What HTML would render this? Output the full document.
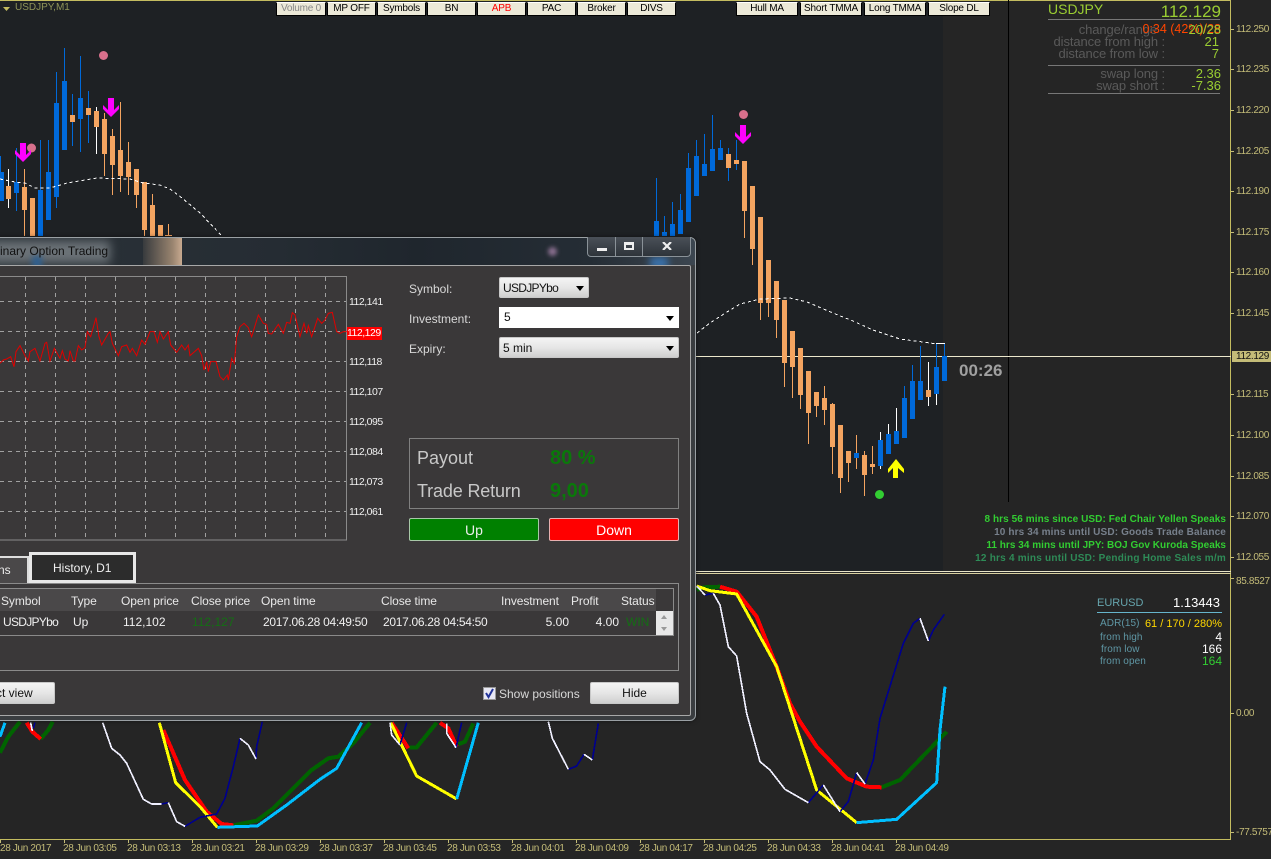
<!DOCTYPE html>
<html><head><meta charset="utf-8"><style>
html,body{margin:0;padding:0;background:#252525}
#p{position:relative;width:1271px;height:859px;overflow:hidden;background:#252525;font-family:"Liberation Sans",sans-serif}
.t{position:absolute;white-space:nowrap;line-height:14px;height:14px}
.r{text-align:right}
.b{position:absolute;box-sizing:border-box}
.a{font-size:10px;letter-spacing:-.35px;color:#c4bc78;left:1236px;margin-top:1px}
.x{font-size:10px;letter-spacing:-.35px;color:#c4bc78;top:842px}
.tb{position:absolute;top:2px;height:14px;box-sizing:border-box;background:#ece9d8;border:1px solid #000;border-top-color:#fff;font-size:10px;letter-spacing:-.2px;line-height:12px;text-align:center;color:#000}
.g{font-size:13px;color:#5a5a5a;letter-spacing:-.1px}
.v{font-size:13px;color:#9acd32}
.n{font-size:10px;font-weight:bold;right:45px}
.l{font-size:12px;color:#d8d8d8}
.h{font-size:12px;color:#e8e8e8;top:594px;letter-spacing:-.08px}
.c{font-size:12px;color:#f0f0f0;top:615px}
.cb{position:absolute;box-sizing:border-box;border:1px solid #c8c8c8;border-radius:2px;background:linear-gradient(#f4f4f4,#e6e6e6 50%,#cfcfcf);font-size:12px;color:#111}
.e{font-size:10px;color:#5f97a5;letter-spacing:.1px}
.f{font-size:12px;color:#fff}
.ar{position:absolute;width:0;height:0;border-left:4px solid transparent;border-right:4px solid transparent;border-top:5px solid #000}
.lb{font-size:10.5px;letter-spacing:-.5px;color:#f0f0f0;left:349px}
</style></head><body><div id="p">

<div class="b" style="left:0;top:0;width:943px;height:571px;background:#1e2124"></div>

<svg class="b" style="left:0;top:0" width="1271" height="859" viewBox="0 0 1271 859" fill="none">
<g shape-rendering="crispEdges">
<path stroke="#c4bc60" d="M0 .5H1231M1230.5 0V840M0 839.5H1231"/>
<path stroke="#000" d="M1008.5 0V502"/>
<path stroke="#c4bc78" d="M1231 29.5h3M1231 69.5h3M1231 110.5h3M1231 151.5h3M1231 191.5h3M1231 232.5h3M1231 272.5h3M1231 313.5h3M1231 394.5h3M1231 435.5h3M1231 476.5h3M1231 516.5h3M1231 557.5h3M1231 578.5h3M1231 713.5h3M1231 832.5h3M.5 840v3M64.5 840v3M128.5 840v3M192.5 840v3M256.5 840v3M320.5 840v3M384.5 840v3M448.5 840v3M512.5 840v3M576.5 840v3M640.5 840v3M704.5 840v3M768.5 840v3M832.5 840v3M896.5 840v3"/>
<path stroke="#e8e4c8" d="M0 571.5H1231"/>
<path stroke="#d8d0a0" d="M0 573.5H1231"/>
<path stroke="#ece8cc" d="M690 356.5H1231"/>

<path stroke="#0069d9" d="M.5 156V201M16.5 148V211M40.5 140V236M48.5 140V220M56.5 72V208M64.5 48V150M72.5 94V146M80.5 56V152M88.5 91V143M656.5 178V236M664.5 216V236M672.5 202V236M680.5 194V234M688.5 153V222M696.5 140V196M704.5 134V176M712.5 115V171M720.5 140V160M728.5 148V181M736.5 140V170M904.5 386V438M912.5 365V419M920.5 346V400M936.5 344V394M944.5 343V381"/>
<path stroke="#f4a460" d="M24.5 169V236M104.5 113V176M112.5 129V195M120.5 102V192M128.5 142V195M136.5 169V208M144.5 182V236M152.5 194V236M168.5 224V236M165 235.5H172M744.5 161V238M752.5 186V265M760.5 217V320M768.5 260V317M776.5 281V338M784.5 300V387M792.5 331V398M800.5 348V409M808.5 371V444M816.5 392V417M824.5 386V425M832.5 403V474M840.5 425V493M848.5 451V482M856.5 435V469M864.5 451V496M872.5 446V474"/>
<path stroke="#fff" d="M8.5 169V208M96.5 107V154M880.5 432V469M888.5 424V454M896.5 408V444M928.5 362V406M936.5 394V405M936 343.5H945"/>
<g stroke="#0069d9" stroke-width="5">
<path d="M1.5 172V201M16.5 182V193M40.5 190V236M48.5 172V220M56.5 103V197M64.5 81V150M80.5 98V119M656.5 221V236M664.5 232V236M672.5 224V236M680.5 210V234M688.5 168V222M696.5 156V196M704.5 164V176M712.5 149V171M720.5 148V160M856.5 453V458M880.5 440V466M888.5 434V454M896.5 431V444M904.5 398V438M912.5 381V419M920.5 381V400M936.5 367V394M944.5 356V381"/>
</g>
<g stroke="#f4a460" stroke-width="5">
<path d="M8.5 186V199M24.5 187V210M32.5 198V236M72.5 115V122M88.5 108V115M96.5 111V127M104.5 119V154M112.5 136V165M120.5 150V176M128.5 162V177M136.5 169V195M144.5 182V230M152.5 205V236M160.5 225V236M728.5 154V168M736.5 160V164M744.5 161V211M752.5 186V249M760.5 217V303M768.5 260V303M776.5 281V320M784.5 300V363M792.5 331V367M800.5 348V395M808.5 371V413M816.5 392V406M824.5 398V410M832.5 404V447M840.5 425V478M848.5 451V463M864.5 455V475M872.5 464V467M928.5 390V397"/>
</g>
<path stroke="#fff" stroke-dasharray="3 3" d="M0 179L15 182L25 183L35 188L50 188L67 183L97 178L130 179L143 183L160 185L170 189L182 198L200 213L222 236"/>
<path stroke="#fff" stroke-dasharray="3 3" d="M697 333L710 323L727 312L740 304L760 299L790 298L807 302L833 313L853 321L873 330L900 339L923 342L937 344"/>
</g>

<circle cx="103.5" cy="55.5" r="4.5" fill="#d8708c"/>
<circle cx="31.5" cy="148" r="4.5" fill="#d8708c"/>
<circle cx="743.5" cy="114.5" r="4.5" fill="#d8708c"/>
<circle cx="879.5" cy="494.5" r="4.5" fill="#32cd32"/>
<g fill="#ff00ff">
<path d="M20 143H26V155L31 150V154L23 162L15 154V150L20 155Z"/>
<path d="M108 98H114V110L119 105V109L111 117L103 109V105L108 110Z"/>
<path d="M740 125H746V137L751 132V136L743 144L735 136V132L740 137Z"/>
</g>
<path fill="#ffff00" d="M893 478V468L888 473V469L896 459L904 469V473L898 468V478Z"/>

<g transform="translate(0,710) scale(.33333)" shape-rendering="crispEdges">
<path stroke="#006400" stroke-width="12" d="M0 128L25 80L60 35"/>
<path stroke="#006400" stroke-width="12" d="M122 87L145 60L158 35"/>
<path stroke="#006400" stroke-width="12" d="M700 346L770 332L820 295L900 215L935 180L985 145L1015 140L1060 100L1110 38"/>
<path stroke="#006400" stroke-width="12" d="M1225 112L1250 112L1310 38M1375 103L1395 95L1420 40"/>
<path stroke="#ff0000" stroke-width="12" d="M80 38L97 65L122 87M490 60L555 210L620 305L665 342L700 346M1175 38L1225 115M1320 38L1345 55L1370 110"/>
<path stroke="#ffff00" stroke-width="9" d="M478 38L527 218L600 290L652 352M1172 38L1250 198L1370 267"/>
<path stroke="#00bfff" stroke-width="9" d="M0 80L15 38M652 352L772 348L860 285L960 208L1010 175L1085 38M1370 267L1435 38"/>
<path stroke="#00008b" stroke-width="5" d="M485 282L505 278M555 349L600 322L650 312L675 265L700 170L720 85M768 147L770 110L787 35M1200 105L1220 38M1368 113L1385 38M100 55L105 38"/>
<path stroke="#f0f0ff" stroke-width="5" d="M308 38L335 115L360 135L380 160L430 268L455 282L485 282M505 278L530 335L555 349M720 85L745 105L768 147M1170 38L1175 75L1200 105M1340 40L1340 70L1368 113M92 38L97 63"/>
</g>
<g transform="translate(500,580) scale(.33333)" shape-rendering="crispEdges">
<path stroke="#006400" stroke-width="12" d="M590 30L610 22L660 20M1145 622L1200 600L1340 455"/>
<path stroke="#ff0000" stroke-width="12" d="M660 20L710 35L770 110L830 260L870 370L900 425L950 500L1040 595L1100 620L1145 622"/>
<path stroke="#ffff00" stroke-width="9" d="M590 18L630 32L710 42L830 260L950 630L1070 728"/>
<path stroke="#00bfff" stroke-width="9" d="M1070 728L1190 718L1310 608L1320 450L1335 320"/>
<path stroke="#00008b" stroke-width="5" d="M205 568L230 558L252 523M277 540L295 430M615 45L640 40M925 668L970 615M1020 695L1045 665L1070 578M1095 612L1120 540L1140 415L1210 190L1240 130L1260 115M1285 183L1300 150L1333 103"/>
<path stroke="#f0f0ff" stroke-width="5" d="M145 425L157 475L205 568M252 523L277 540M590 18L615 45M640 40L660 75L685 200L710 228L740 400L780 545L810 570L855 628L925 668M970 615L1020 695M1070 578L1095 612M1260 115L1285 183"/>
</g>
<path fill="#c4bc60" d="M3 7h7l-3.500 4z"/>
</svg>

<div class="t" style="left:15px;top:1px;font-size:10px;color:#8f9458">USDJPY,M1</div>
<div class="tb" style="left:276px;width:50px;color:#888">Volume 0</div>
<div class="tb" style="left:327px;width:49px">MP OFF</div>
<div class="tb" style="left:377px;width:49px">Symbols</div>
<div class="tb" style="left:427px;width:49px">BN</div>
<div class="tb" style="left:477px;width:49px;color:#f00">APB</div>
<div class="tb" style="left:527px;width:49px">PAC</div>
<div class="tb" style="left:577px;width:49px">Broker</div>
<div class="tb" style="left:627px;width:49px">DIVS</div>
<div class="tb" style="left:736px;width:62px">Hull MA</div>
<div class="tb" style="left:800px;width:62px">Short TMMA</div>
<div class="tb" style="left:864px;width:62px">Long TMMA</div>
<div class="tb" style="left:928px;width:62px">Slope DL</div>

<div class="t" style="left:1048px;top:2px;font-size:14px;color:#9acd32">USDJPY</div>
<div class="t r" style="right:50px;top:5px;font-size:17px;color:#9acd32">112.129</div>
<div class="b" style="left:1048px;top:19px;width:172px;height:1px;background:#777"></div>
<div class="t g r" style="right:114px;top:23px">change/range</div>
<div class="t r" style="right:50px;top:22px;font-size:12.5px;color:#ff4500">0:34 (42%)/28</div>
<div class="t r" style="right:50px;top:23px;font-size:13px;color:#9acd32">20/28</div>
<div class="t g r" style="right:106px;top:35px">distance from high :</div>
<div class="t v r" style="right:52px;top:35px">21</div>
<div class="t g r" style="right:106px;top:47px">distance from low :</div>
<div class="t v r" style="right:52px;top:47px">7</div>
<div class="b" style="left:1048px;top:65px;width:172px;height:1px;background:#777"></div>
<div class="t g r" style="right:106px;top:67px">swap long :</div>
<div class="t v r" style="right:50px;top:67px">2.36</div>
<div class="t g r" style="right:106px;top:79px">swap short :</div>
<div class="t v r" style="right:50px;top:79px">-7.36</div>
<div class="b" style="left:1048px;top:93px;width:172px;height:1px;background:#777"></div>

<div class="t a" style="top:22px">112.250</div><div class="t a" style="top:62px">112.235</div>
<div class="t a" style="top:103px">112.220</div><div class="t a" style="top:144px">112.205</div>
<div class="t a" style="top:184px">112.190</div><div class="t a" style="top:225px">112.175</div>
<div class="t a" style="top:265px">112.160</div><div class="t a" style="top:306px">112.145</div>
<div class="b" style="left:1232px;top:351px;width:39px;height:11px;background:#c4bc78"></div>
<div class="t a" style="top:349px;color:#111">112.129</div>
<div class="t a" style="top:387px">112.115</div><div class="t a" style="top:428px">112.100</div>
<div class="t a" style="top:469px">112.085</div><div class="t a" style="top:509px">112.070</div>
<div class="t a" style="top:550px">112.055</div>
<div class="t a" style="top:574px">85.8527</div>
<div class="t a" style="top:706px">0.00</div>
<div class="t a" style="top:825px">-77.5757</div>

<div class="t" style="left:959px;top:364px;font-size:17px;font-weight:bold;color:#a0a0a0">00:26</div>
<div class="t n r" style="top:513px;color:#32cd32;letter-spacing:.08px">8 hrs 56 mins since USD: Fed Chair Yellen Speaks</div>
<div class="t n r" style="top:526px;color:#77808c;letter-spacing:.14px">10 hrs 34 mins until USD: Goods Trade Balance</div>
<div class="t n r" style="top:539px;color:#32cd32;letter-spacing:.03px">11 hrs 34 mins until JPY: BOJ Gov Kuroda Speaks</div>
<div class="t n r" style="top:552px;color:#2e8b57;letter-spacing:.23px">12 hrs 4 mins until USD: Pending Home Sales m/m</div>

<div class="t" style="left:1097px;top:596px;font-size:11px;color:#66a5ad">EURUSD</div>
<div class="t r" style="right:51px;top:596px;font-size:13px;color:#fff">1.13443</div>
<div class="b" style="left:1097px;top:612px;width:125px;height:1px;background:#66b5cc"></div>
<div class="t e" style="left:1100px;top:617px">ADR(15)</div>
<div class="t r" style="right:49px;top:617px;font-size:11px;color:#ffd700">61 / 170 / 280%</div>
<div class="t e" style="left:1100px;top:631px">from high</div><div class="t f r" style="right:49px;top:630px">4</div>
<div class="t e" style="left:1101px;top:643px">from low</div><div class="t f r" style="right:49px;top:642px">166</div>
<div class="t e" style="left:1100px;top:655px">from open</div><div class="t f r" style="right:49px;top:654px;color:#32cd32">164</div>

<div class="t x" style="left:0">28 Jun 2017</div><div class="t x" style="left:63px">28 Jun 03:05</div>
<div class="t x" style="left:127px">28 Jun 03:13</div><div class="t x" style="left:191px">28 Jun 03:21</div>
<div class="t x" style="left:255px">28 Jun 03:29</div><div class="t x" style="left:319px">28 Jun 03:37</div>
<div class="t x" style="left:383px">28 Jun 03:45</div><div class="t x" style="left:447px">28 Jun 03:53</div>
<div class="t x" style="left:511px">28 Jun 04:01</div><div class="t x" style="left:575px">28 Jun 04:09</div>
<div class="t x" style="left:639px">28 Jun 04:17</div><div class="t x" style="left:703px">28 Jun 04:25</div>
<div class="t x" style="left:767px">28 Jun 04:33</div><div class="t x" style="left:831px">28 Jun 04:41</div>
<div class="t x" style="left:895px">28 Jun 04:49</div>

<div class="b" style="left:-6px;top:237px;width:702px;height:484px;border:1px solid #9aa0a4;border-radius:6px;background:#3a3d40;box-shadow:0 0 4px rgba(0,0,0,.5)"></div>
<div class="b" style="left:0;top:238px;width:695px;height:27px;overflow:hidden;border-top-right-radius:5px;background:linear-gradient(90deg,#2b3238,#252c33 40%,#1f262d 60%,#252d35 85%,#3c4650)">
<div class="b" style="left:-10px;top:3px;width:120px;height:22px;background:#6c7378;filter:blur(5px)"></div>
<div class="b" style="left:143px;top:-6px;width:39px;height:40px;background:linear-gradient(90deg,rgba(190,160,130,.1),rgba(190,160,130,.75) 75%,#c8aa90)"></div>
<div class="b" style="left:32px;top:18px;width:10px;height:12px;background:#30608f;filter:blur(3px)"></div>
<div class="b" style="left:548px;top:9px;width:9px;height:9px;border-radius:50%;background:#8a6f8f;filter:blur(2px)"></div>
<div class="b" style="left:650px;top:19px;width:18px;height:12px;background:#3a74b0;filter:blur(4px)"></div>
</div>
<div class="t" style="left:0;top:244px;font-size:12px;color:#111">inary Option Trading</div>

<div class="b" style="left:587px;top:237px;width:104px;height:20px;border:1px solid #8a9298;border-top:0;border-radius:0 0 4px 4px;background:linear-gradient(#4a5058,#2e343a)"></div>
<div class="b" style="left:615px;top:237px;width:1px;height:19px;background:#8a9298"></div>
<div class="b" style="left:642px;top:237px;width:1px;height:19px;background:#8a9298"></div>
<div class="b" style="left:597px;top:248px;width:10px;height:3px;background:#eee"></div>
<div class="b" style="left:624px;top:242px;width:10px;height:8px;border:2px solid #eee;border-top-width:3px"></div>
<svg class="b" style="left:662px;top:242px" width="10" height="8" viewBox="0 0 10 8"><path stroke="#eee" stroke-width="2.200" d="M1 0L9 8M9 0L1 8"/></svg>

<div class="b" style="left:0;top:265px;width:691px;height:451px;background:#3a3839;border:1px solid #a8a8a8;border-left:0;border-radius:0 2px 2px 0"></div>

<svg class="b" style="left:0;top:235px" width="400" height="320" viewBox="0 0 1200 960" fill="none">
<g stroke="#a0a0a0" stroke-width="3" stroke-dasharray="12 12" shape-rendering="crispEdges">
<path d="M0 199H1040M0 289H1040M0 379H1040M0 469H1040M0 559H1040M0 649H1040M0 739H1040M0 829H1040"/>
<path d="M76 126V915M166 126V915M256 126V915M346 126V915M436 126V915M526 126V915M616 126V915M706 126V915M796 126V915M886 126V915M976 126V915"/>
</g>
<path stroke="#8a8a8a" stroke-width="3" shape-rendering="crispEdges" d="M0 124.500H1039.500V915.500H0"/>
<path stroke="#e00000" stroke-width="3" d="M0 385L10 375L20 372L32 365L42 395L48 350L60 332L75 362L85 378L90 350L105 340L120 378L135 325L140 322L150 378L163 340L180 370L187 347L195 372L205 378L210 347L220 378L225 378L235 332L245 345L255 338L262 290L272 305L288 248L297 305L305 330L325 295L330 290L337 325L355 362L365 335L380 330L390 352L397 340L410 362L425 315L435 328L450 290L462 290L472 322L480 290L490 312L505 290L512 330L530 352L545 330L555 345L565 330L570 362L595 340L605 362L612 405L620 380L625 410L632 380L648 380L660 425L670 435L682 420L685 435L695 370L703 385L710 305L720 275L732 265L745 278L755 305L775 240L790 265L800 268L805 295L815 297L835 268L850 295L860 262L870 265L877 233L885 240L900 305L912 265L920 295L925 272L935 305L953 250L965 265L975 255L985 235L997 232L1010 290L1020 295L1030 290L1040 290"/>
</svg>
<div class="t lb" style="top:295px">112,141</div>
<div class="b" style="left:347px;top:327px;width:35px;height:13px;background:#f00"></div>
<div class="t lb" style="top:326px;left:347px;color:#fff">112,129</div>
<div class="t lb" style="top:355px">112,118</div>
<div class="t lb" style="top:385px">112,107</div>
<div class="t lb" style="top:415px">112,095</div>
<div class="t lb" style="top:445px">112,084</div>
<div class="t lb" style="top:475px">112,073</div>
<div class="t lb" style="top:505px">112,061</div>

<div class="t l" style="left:409px;top:282px">Symbol:</div>
<div class="t l" style="left:409px;top:312px">Investment:</div>
<div class="t l" style="left:409px;top:342px">Expiry:</div>
<div class="cb" style="left:499px;top:277px;width:90px;height:21px;padding:3px 0 0 3px;line-height:14px;letter-spacing:-.7px">USDJPYbo</div>
<div class="ar" style="left:576px;top:286px"></div>
<div class="b" style="left:499px;top:307px;width:180px;height:21px;background:#fff;font-size:12px;color:#111;padding:3px 0 0 5px;line-height:14px">5</div>
<div class="ar" style="left:666px;top:316px"></div>
<div class="cb" style="left:499px;top:337px;width:180px;height:21px;padding:3px 0 0 3px;line-height:14px">5 min</div>
<div class="ar" style="left:666px;top:346px"></div>

<div class="b" style="left:409px;top:438px;width:270px;height:71px;border:1px solid #808080"></div>
<div class="t" style="left:417px;top:451px;font-size:18px;color:#c8c8c8">Payout</div>
<div class="t" style="left:417px;top:484px;font-size:18px;letter-spacing:-.15px;color:#c8c8c8">Trade Return</div>
<div class="t" style="left:550px;top:451px;font-size:20px;font-weight:bold;color:#0a780a">80 %</div>
<div class="t" style="left:550px;top:484px;font-size:20px;font-weight:bold;color:#0a780a">9,00</div>
<div class="b" style="left:409px;top:518px;width:130px;height:23px;background:#008000;border:1px solid #a8c8a8;border-radius:2px;color:#eee;font-size:14px;text-align:center;line-height:23px">Up</div>
<div class="b" style="left:549px;top:518px;width:130px;height:23px;background:#f00;border:1px solid #e8b0b0;border-radius:2px;color:#fff;font-size:14px;text-align:center;line-height:23px">Down</div>

<div class="b" style="left:0;top:556px;width:29px;height:27px;background:#4a4849;border-top:2px solid #ddd;border-right:2px solid #ddd"></div>
<div class="t" style="left:-2px;top:563px;font-size:12px;color:#eee">ns</div>
<div class="b" style="left:0;top:583px;width:679px;height:88px;border:1px solid #8a8a8a;border-left:0"></div>
<div class="b" style="left:29px;top:552px;width:107px;height:31px;background:#2c2c2c;border:3px solid #e8e8e8"></div>
<div class="t" style="left:53px;top:561px;font-size:12px;color:#f0f0f0">History, D1</div>

<div class="b" style="left:0;top:588px;width:656px;height:23px;background:#4a4849"></div>
<div class="b" style="left:656px;top:588px;width:17px;height:23px;background:#3a3839"></div>
<div class="b" style="left:0;top:588px;width:674px;height:48px;border:1px solid #8a8a8a;border-left:0"></div>
<div class="b" style="left:656px;top:611px;width:17px;height:24px;background:#e8e8e8"></div>
<svg class="b" style="left:660px;top:614px" width="8" height="18" viewBox="0 0 8 18"><path fill="#999" d="M4 1L7 5H1zM1 13H7L4 17z"/></svg>
<div class="t h" style="left:1px">Symbol</div><div class="t h" style="left:71px">Type</div>
<div class="t h" style="left:121px">Open price</div><div class="t h" style="left:191px">Close price</div>
<div class="t h" style="left:261px">Open time</div><div class="t h" style="left:381px">Close time</div>
<div class="t h" style="left:501px">Investment</div><div class="t h" style="left:571px">Profit</div>
<div class="t h" style="left:621px">Status</div>
<div class="t c" style="left:3px;letter-spacing:-.7px">USDJPYbo</div><div class="t c" style="left:73px">Up</div>
<div class="t c" style="left:123px">112,102</div><div class="t c" style="left:192px;color:#146e14">112,127</div>
<div class="t c" style="left:263px;letter-spacing:-.3px">2017.06.28 04:49:50</div>
<div class="t c" style="left:383px;letter-spacing:-.3px">2017.06.28 04:54:50</div>
<div class="t c r" style="right:702px">5.00</div><div class="t c r" style="right:652px">4.00</div>
<div class="t c" style="left:626px;color:#146e14">WIN</div>

<div class="cb" style="left:-6px;top:682px;width:61px;height:22px;padding:3px 0 0 1px;line-height:14px">ct view</div>
<div class="b" style="left:483px;top:687px;width:13px;height:13px;background:#e8e8f4;border:1px solid #999"></div>
<svg class="b" style="left:484px;top:688px" width="11" height="11" viewBox="0 0 11 11"><path stroke="#223399" stroke-width="2" fill="none" d="M2 5L4.500 9L9 1"/></svg>
<div class="t l" style="left:499px;top:687px">Show positions</div>
<div class="cb" style="left:590px;top:682px;width:89px;height:22px;text-align:center;padding-top:3px;line-height:14px">Hide</div>
</div></body></html>
